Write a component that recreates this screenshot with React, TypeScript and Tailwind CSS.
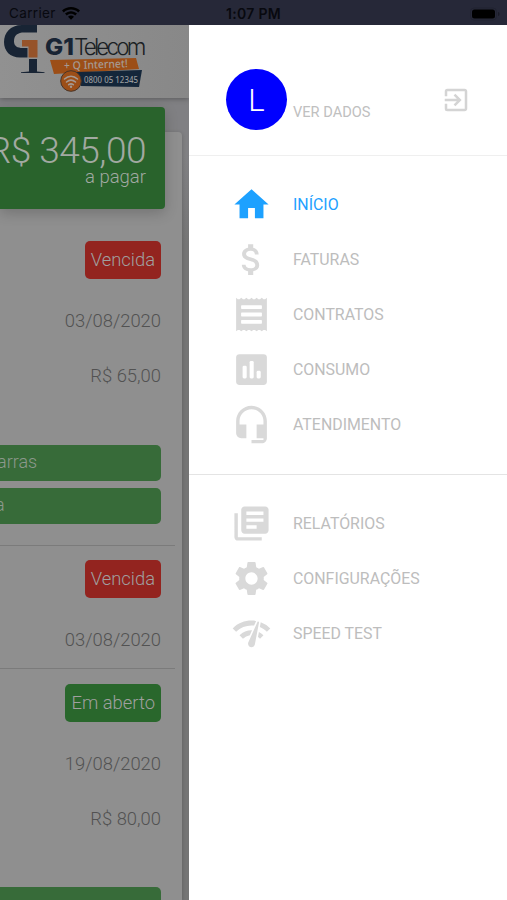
import {
  MdAttachMoney,
  MdExitToApp,
  MdHome,
  MdLibraryBooks,
  MdNetworkCheck,
  MdSettings,
} from 'react-icons/md';
import type { ComponentType } from 'react';

interface MenuEntry {
  label: string;
  icon: ComponentType<{ className?: string }>;
  active?: boolean;
}

const ReceiptIcon = ({ className }: { className?: string }) => (
  <svg viewBox="0 0 24 24" className={className} fill="currentColor">
    <path
      fillRule="evenodd"
      d="M3 2.200l1 .8h1l1-.8 1 .8h1l1-.8 1 .8h1l1-.8 1 .8h1l1-.8 1 .8h1l1-.8 1 .8h1l1-.8v19.600l-1-.8h-1l-1 .8-1-.8h-1l-1 .8-1-.8h-1l-1 .8-1-.8h-1l-1 .8-1-.8H8l-1 0-1 .8-1-.8H4l-1 .8zM6.300 6.600a.4.4 0 0 0-.4.4v1.400c0 .2.200.4.4.4h11.400a.4.4 0 0 0 .4-.4V7a.4.4 0 0 0-.4-.4zM6.300 10.900a.4.4 0 0 0-.4.4v1.400c0 .2.200.4.4.4h11.400a.4.4 0 0 0 .4-.4v-1.400a.4.4 0 0 0-.4-.4zM6.300 15.200a.4.4 0 0 0-.4.4V17c0 .2.200.4.4.4h11.400a.4.4 0 0 0 .4-.4v-1.400a.4.4 0 0 0-.4-.4z"
    />
  </svg>
);

const ChartIcon = ({ className }: { className?: string }) => (
  <svg viewBox="0 0 24 24" className={className}>
    <rect x="3" y="3" width="18" height="18" rx="2" fill="currentColor" />
    <g fill="#fff">
      <rect x="6.800" y="9.800" width="2.400" height="7.400" rx="0.800" />
      <rect x="10.900" y="7" width="2.400" height="10.200" rx="0.800" />
      <rect x="15" y="12.800" width="2.400" height="4.400" rx="0.800" />
    </g>
  </svg>
);

const HeadsetIcon = ({ className }: { className?: string }) => (
  <svg viewBox="0 0 24 24" className={className} fill="currentColor">
    <path d="M12 1c-4.970 0-9 4.030-9 9v7c0 1.660 1.340 3 3 3h3v-8H5v-2c0-3.870 3.130-7 7-7s7 3.130 7 7v2h-4v8h4v1h-7v2h6c1.660 0 3-1.340 3-3V10c0-4.970-4.030-9-9-9z" />
  </svg>
);

const MAIN_MENU: MenuEntry[] = [
  { label: 'INÍCIO', icon: MdHome, active: true },
  { label: 'FATURAS', icon: MdAttachMoney },
  { label: 'CONTRATOS', icon: ReceiptIcon },
  { label: 'CONSUMO', icon: ChartIcon },
  { label: 'ATENDIMENTO', icon: HeadsetIcon },
];

const EXTRA_MENU: MenuEntry[] = [
  { label: 'RELATÓRIOS', icon: MdLibraryBooks },
  { label: 'CONFIGURAÇÕES', icon: MdSettings },
  { label: 'SPEED TEST', icon: MdNetworkCheck },
];

const WifiIcon = () => (
  <svg viewBox="0 0 18 13" className="w-[18px] h-[13px] fill-black">
    <path d="M9 0C5.5 0 2.4 1.3 0 3.5l1.8 1.9C3.7 3.6 6.2 2.6 9 2.6s5.300 1 7.200 2.800L18 3.500C15.600 1.300 12.500 0 9 0z" />
    <path d="M9 4.200c-2.300 0-4.400.9-6 2.400l1.800 1.900C5.900 7.400 7.400 6.800 9 6.800s3.100.6 4.200 1.700L15 6.600c-1.600-1.500-3.700-2.400-6-2.400z" />
    <path d="M9 8.500c-1.200 0-2.200.4-3 1.200l3 3.100 3-3.100c-.8-.8-1.800-1.200-3-1.200z" />
  </svg>
);

const StatusBar = () => (
  <div className="grid grid-cols-3 items-center h-[25px] shrink-0 pl-[9px] pr-[7px] pt-[2px] bg-[#262838] text-[#08090f]">
    <div className="flex items-center gap-[6px] text-[13.500px]">
      <span className="tracking-[0.35px]">Carrier</span>
      <WifiIcon />
    </div>
    <span className="pr-[2px] text-center text-[14px] font-semibold tracking-[0.3px] whitespace-nowrap">1:07 PM</span>
    <svg viewBox="0 0 30 14" className="w-[30px] h-[14px] justify-self-end">
      <rect x="0.500" y="1" width="26" height="12" rx="3.500" fill="none" stroke="#212331" />
      <rect x="2" y="2.500" width="23" height="9" rx="2.500" fill="#000" />
      <path d="M28 5v4c1-.4 1.500-1.200 1.500-2S29 5.400 28 5z" fill="#1a1b27" />
    </svg>
  </div>
);

const Logo = () => (
  <svg viewBox="0 0 150 73" className="w-[150px] h-[73px]">
    <path
      d="M37 0H22C10 0 4 8 4 17c0 9 6 15.500 16 15.500h7.500V23h-5c-5 0-8.500-2-8.500-6.500C14 10 18 7.500 24 7.500h13z"
      fill="#182434"
    />
    <path d="M22 15h15.500v17.500H28.500V21.500H22z" fill="#96532a" />
    <path d="M29 34h8v12.500l7.500.8v.8H21v-.8l8-.8z" fill="#182434" />
    <text x="45" y="30" fontFamily="Inter" fontWeight="800" fontSize="22.500" textLength="29" lengthAdjust="spacingAndGlyphs" fill="#182434">
      G1
    </text>
    <text x="74" y="30" fontFamily="Inter" fontWeight="300" fontSize="22.500" textLength="72.500" lengthAdjust="spacing" fill="#1b1f24">
      Telecom
    </text>
    <path d="M50 35l86-2 3 11-85 5z" fill="#9c4e17" />
    <path d="M76 47l66-2-3 17-58-1z" fill="#14263a" />
    <text x="64" y="44.500" fontFamily="Noto Sans" fontWeight="500" fontSize="11" textLength="64" lengthAdjust="spacingAndGlyphs" transform="rotate(-2 64 44)" fill="#a59a93">
      + Q Internet!
    </text>
    <text x="84" y="58" fontFamily="Noto Sans" fontWeight="500" fontSize="8.500" textLength="54" lengthAdjust="spacingAndGlyphs" fill="#96999c">
      0800 05 12345
    </text>
    <circle cx="71" cy="56" r="10.300" fill="#9c4e17" stroke="#4a3527" strokeWidth="1" />
    <g fill="none" stroke="#a59a93" strokeWidth="1.600" strokeLinecap="round">
      <path d="M64.500 54c4-3.600 9-3.600 13 0" />
      <path d="M66.500 57c2.800-2.400 6.200-2.400 9 0" />
      <path d="M68.700 59.700c1.500-1.100 3.100-1.100 4.600 0" />
    </g>
    <circle cx="71" cy="61.800" r="1.200" fill="#a59a93" />
  </svg>
);

const Badge = ({ label, open }: { label: string; open?: boolean }) => (
  <div
    className={`self-end flex items-center h-[38px] shrink-0 px-[6px] pb-px rounded-[5px] text-[18.400px] font-light text-[#a0a0a0] ${
      open ? 'bg-[#29672c]' : 'bg-[#93241f]'
    }`}
  >
    {label}
  </div>
);

const Cell = ({ children }: { children: string }) => (
  <div className="flex items-center justify-end h-[55px] pb-[2px] text-[18.400px] font-light text-[#525252]">
    {children}
  </div>
);

const ActionButton = ({ label, indent }: { label: string; indent?: string }) => (
  <div
    className={`flex items-center h-[36px] shrink-0 pb-[3px] rounded-r-[5px] bg-[#376b39] text-[18px] font-light text-[#8c988c] ${indent ?? ''}`}
  >
    {label}
  </div>
);

const Dashboard = () => (
  <main className="flex flex-col w-[189px] shrink-0 overflow-hidden bg-linear-to-b from-[#808083] from-15% to-[#757575] to-25%">
    <header className="relative h-[73px] shrink-0 bg-linear-to-r from-[#919191] to-[#888888] shadow-[0_1px_5px_rgba(0,0,0,0.3)]">
      <Logo />
    </header>

    <section className="flex flex-col mt-[34px] mr-[7px] h-[768px] shrink-0 rounded-tr-[4px] bg-[#8f8f8f] shadow-[0_1px_4px_rgba(0,0,0,0.2)]">
      <div className="relative flex flex-col items-end shrink-0 -mt-[25px] mr-[17px] h-[102px] pr-[19px] pt-[27px] rounded-r-[4px] bg-[#29632c] text-[#a2a9a2] font-light whitespace-nowrap shadow-[0_4px_14px_rgba(0,0,0,0.2)]">
        <span className="text-[37px] leading-[34px] tracking-[-0.5px]">R$ 345,00</span>
        <span className="text-[18.500px] leading-[18px]">a pagar</span>
      </div>

      <div className="flex flex-col mt-[32px] mr-[7px] pr-[14px] h-[305px] shrink-0 border-b border-[#7b7b7b]">
        <Badge label="Vencida" />
        <div className="mt-[15px]">
          <Cell>03/08/2020</Cell>
          <Cell>R$ 65,00</Cell>
        </div>
        <div className="flex flex-col gap-[7px] mt-[41px]">
          <ActionButton label="arras" indent="-ml-[3px]" />
          <ActionButton label="a" indent="-ml-[5px]" />
        </div>
      </div>

      <div className="flex flex-col mr-[7px] pt-[14px] pr-[14px] h-[123px] shrink-0 border-b border-[#7b7b7b]">
        <Badge label="Vencida" />
        <div className="mt-[15px]">
          <Cell>03/08/2020</Cell>
        </div>
      </div>

      <div className="flex flex-col mr-[7px] pt-[15px] pr-[14px]">
        <Badge label="Em aberto" open />
        <div className="mt-[15px]">
          <Cell>19/08/2020</Cell>
          <Cell>R$ 80,00</Cell>
        </div>
        <div className="mt-[40px]">
          <ActionButton label="" />
        </div>
      </div>
    </section>
  </main>
);

const MenuItem = ({ label, icon: Icon, active }: MenuEntry) => (
  <li className={`flex items-center h-[55px] pl-[42px] ${active ? 'text-[#1da1ff]' : 'text-[#bdbdbd]'}`}>
    <Icon className={`w-[41px] h-[41px] shrink-0 ${active ? '' : 'text-[#d9d9d9]'}`} />
    <span className="ml-[21px] text-[15.900px]">{label}</span>
  </li>
);

const Drawer = () => (
  <aside className="flex flex-col flex-1 bg-white">
    <div className="flex items-center h-[131px] shrink-0 pl-[37px] pr-[36px] pt-[18px] border-b border-[#efefef]">
      <div className="flex items-center justify-center w-[61px] h-[61px] pt-[5px] rounded-full bg-[#0000ff] text-white text-[31px] font-light">
        L
      </div>
      <span className="ml-[6px] mt-[28px] text-[14.600px] text-[#c0c0c0]">VER DADOS</span>
      <MdExitToApp className="w-[30px] h-[30px] ml-auto mt-px text-[#d4d4d4]" />
    </div>
    <ul className="pt-[21px] pb-[22px] border-b border-[#e4e4e4]">
      {MAIN_MENU.map(item => (
        <MenuItem key={item.label} {...item} />
      ))}
    </ul>
    <ul className="pt-[21px]">
      {EXTRA_MENU.map(item => (
        <MenuItem key={item.label} {...item} />
      ))}
    </ul>
  </aside>
);

const App = () => (
  <div className="flex flex-col w-[507px] h-[900px] overflow-hidden font-['Roboto',sans-serif]">
    <div className="font-['Inter',sans-serif]">
      <StatusBar />
    </div>
    <div className="flex flex-1 min-h-0">
      <Dashboard />
      <Drawer />
    </div>
  </div>
);

export default App;
